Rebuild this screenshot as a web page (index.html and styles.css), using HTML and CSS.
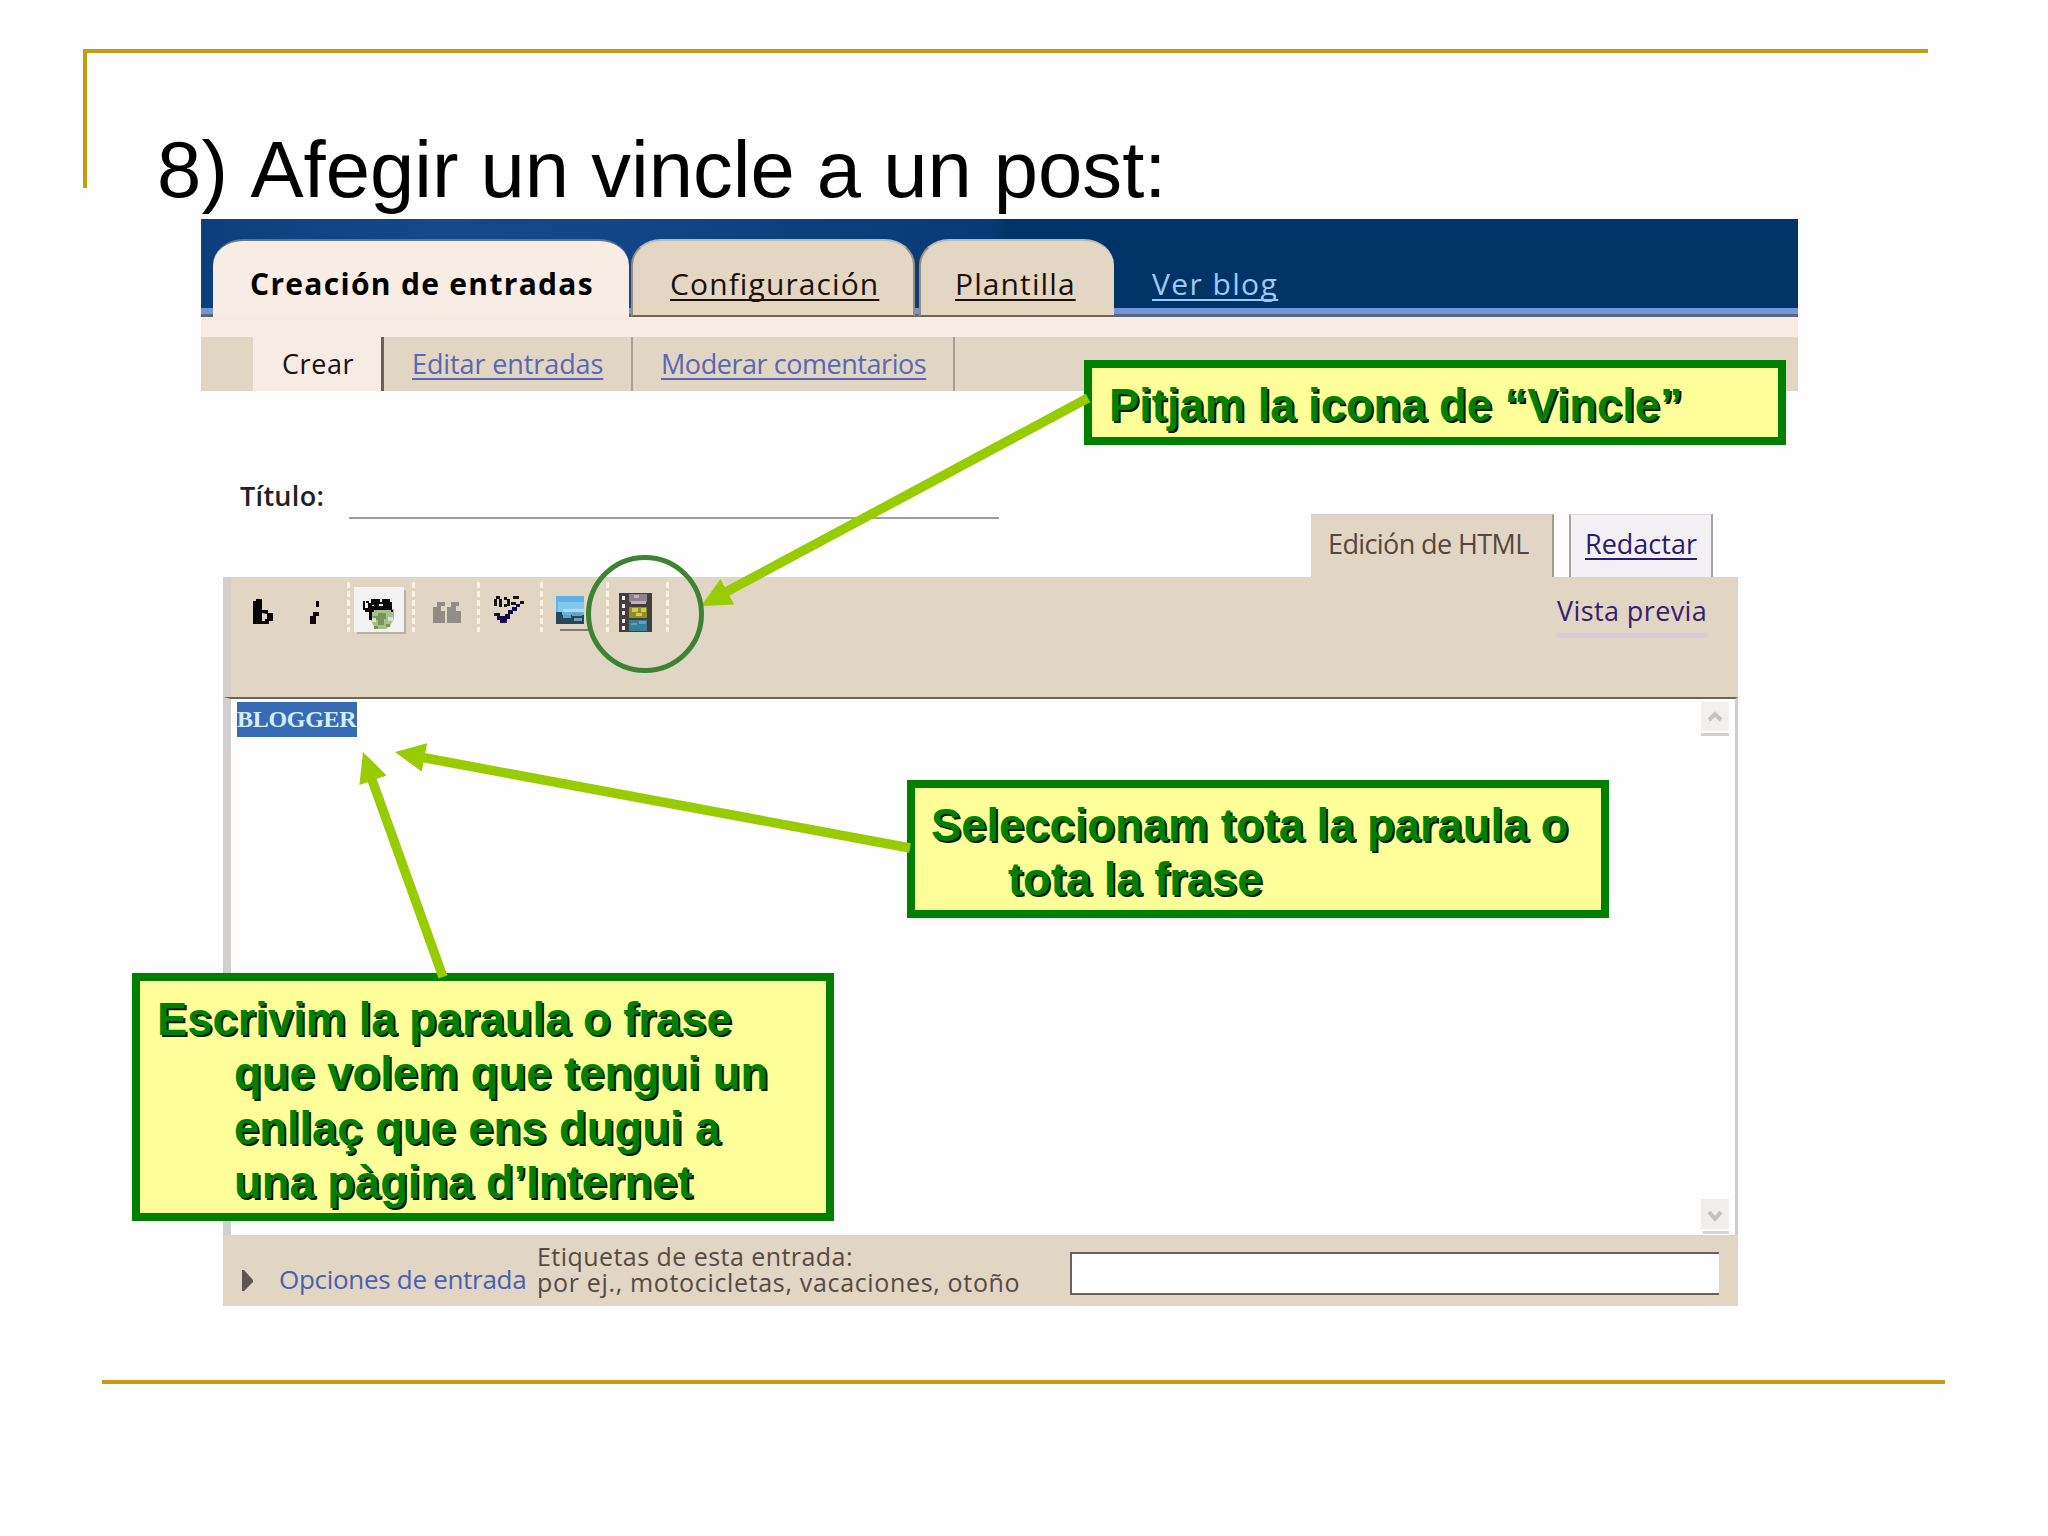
FILE: index.html
```html
<!DOCTYPE html>
<html lang="ca">
<head>
<meta charset="utf-8">
<title>8) Afegir un vincle a un post</title>
<link rel="stylesheet" href="styles.css">
</head>
<body>
<main class="slide">
  <h1 class="title"><span class="title-number">8) </span>Afegir un vincle a un post:</h1>

  <section class="app">
    <nav class="masthead">
      <a class="tab tab-active"><span class="t-crea">Creación de entradas</span></a>
      <a class="tab tab-config"><span class="t-conf link">Configuración</span></a>
      <a class="tab tab-template"><span class="t-plan link">Plantilla</span></a>
      <a class="view-blog"><span class="t-ver link">Ver blog</span></a>
    </nav>
    <nav class="subnav">
      <a class="sub sub-active"><span class="t-crear">Crear</span></a>
      <a class="sub sub-edit"><span class="t-edit link">Editar entradas</span></a>
      <a class="sub sub-mod"><span class="t-mod link">Moderar comentarios</span></a>
    </nav>

    <div class="compose">
      <div class="heading-row">
        <label class="field-label"><span class="t-titulo">Título:</span></label>
        <div class="field"></div>
        <div class="modes">
          <a class="mode mode-html"><span class="t-html">Edición de HTML</span></a>
          <a class="mode mode-write"><span class="t-red link">Redactar</span></a>
        </div>
      </div>

      <div class="toolbar">
        <svg class="icons" width="480" height="120" viewBox="223 577 480 120">
          <g stroke="#fbf3e2" stroke-width="3" stroke-dasharray="6 3">
            <path d="M348.500 582V632M413.500 582V632M478.500 582V632M541.500 582V632M607.500 582V632M667.500 582V632"/>
          </g>
          <path fill="#050303" fill-rule="evenodd" d="M253 601h3v-2h6v11h6v3h5v8h-4v3h-16zM262 613v8h3v-2h2v-5z"/>
          <path fill="#120a08" d="M316 601h3v6h-3zM313 612h6v4h-3v8h-6v-8h3z"/>
          <path fill="#b9b1a8" d="M357 590h49v44h-49z"/>
          <path fill="#f3f3f3" d="M354 587h50v45h-50z"/>
          <path fill="#a8bf8c" d="M370 609h24v10l-4 7-4 3h-9l-4-4-3-7z"/>
          <path fill="#78955f" d="M378 613h8v6h-2v6h-6v-5h-5v-4h5zM374 626h4v3h-4zM386 624h4v3h-4z"/>
          <path fill="#d4e5bf" d="M372 618h4v4h-4zM388 617h5v4h-5z"/>
          <path fill="#080808" d="M363 601h2v7h3v-5h-2v-2h3v2h2v-4h9v3h2v-3h8v3h2v8h-18v2h-9v-2h-2zM369 612h3v8h-3zM391 610h2v2h-2z"/>
          <path fill="#e8e8e8" d="M372 605h2v1h-2zM379 604h4v2h-4z"/>
          <path fill="#918c85" d="M437 602h8v4h-4v5h4v12h-12v-16h4zM451 602h8v4h-3v5h5v12h-14v-16h4z"/>
          <path fill="#171313" d="M496 596h4v3h-4zM494 599h3v7h-3zM499 599h3v8h-3zM504 597h3v3h-3zM507 599h3v7h-3zM504 604h3v3h-3zM513 596h6v3h-6zM511 602h5v3h-5zM520 601h4v3h-4z"/>
          <path fill="#160848" d="M494 613h6v3h5v-2h3v-4h4v-3h4v-3h4v3h-3v4h-4v3h-3v5h-3v4h-7v-3h-3v-4h-3z"/>
          <path fill="#84796e" d="M560 629h30v2h-30z"/>
          <path fill="#60b2e4" d="M556 596h28v28h-28z"/>
          <path fill="#83c8ee" d="M558 602h26v10h-26z"/>
          <path fill="#b5d9e7" d="M563 609h21v3h-21z"/>
          <path fill="#24475b" d="M556 612h6v3h22v9h-28z"/>
          <path fill="#6e9fb4" d="M563 615h8v3h-8zM572 613h10v3h-10zM574 618h8v3h-8z"/>
          <path fill="#443d40" d="M619 593h33v39h-33z"/>
          <path fill="#f3eee5" d="M622 596h3v4h-3zM622 604h3v4h-3zM622 611h3v4h-3zM622 619h3v4h-3zM622 626h3v4h-3z"/>
          <path fill="#8f7f91" d="M629 594h18v8h-18z"/>
          <path fill="#bfb2b8" d="M631 601h15v3h-15zM634 595h5v3h-5z"/>
          <path fill="#8c9227" d="M629 607h18v11h-18z"/>
          <path fill="#d3ce43" d="M632 608h6v4h-6zM641 608h5v4h-5zM636 613h6v3h-6z"/>
          <path fill="#397e99" d="M629 620h18v11h-18z"/>
          <path fill="#5aa3b8" d="M631 623h6v2h-6zM639 621h7v3h-7z"/>
        </svg>
        <a class="preview"><span class="t-vista">Vista previa</span></a>
      </div>

      <div class="editor">
        <div class="editor-text"><span class="selected"><span class="t-blog">BLOGGER</span></span></div>
        <div class="scrollbar">
          <svg class="scroll-btn" width="30" height="35" viewBox="0 0 30 35"><path fill="#f1f0ef" d="M0 0h28v29h-28z"/><path fill="#d3d1cf" d="M0 31h28v3h-28z"/><path fill="none" stroke="#c4c2c0" stroke-width="4" d="M8 18l6-6 6 6"/></svg>
          <svg class="scroll-btn" width="30" height="35" viewBox="0 0 30 35"><path fill="#f0eeec" d="M0 0h28v30h-28z"/><path fill="#d7d3cf" d="M2 32h26v3h-26z"/><path fill="none" stroke="#c4c2c0" stroke-width="4" d="M8 13l6 7 6-7"/></svg>
        </div>
      </div>

      <div class="options">
        <svg class="disclosure" width="12" height="22" viewBox="0 0 12 22"><path fill="#5e564e" d="M0 0h2l9 10v2l-9 9h-2z"/></svg>
        <a class="options-link"><span class="t-opc">Opciones de entrada</span></a>
        <div class="labels-text">
          <div><span class="t-etq">Etiquetas de esta entrada:</span></div>
          <div><span class="t-por">por ej., motocicletas, vacaciones, otoño</span></div>
        </div>
        <div class="labels-input"></div>
      </div>
    </div>
  </section>

  <div class="bottom-rule"></div>

  <p class="callout callout-icon">Pitjam la icona de “Vincle”</p>
  <p class="callout callout-select">Seleccionam tota la paraula o<br><span class="indent">tota la frase</span></p>
  <p class="callout callout-write">Escrivim la paraula o frase<br><span class="indent">que volem que tengui un</span><br><span class="indent">enllaç que ens dugui a</span><br><span class="indent">una pàgina d’Internet</span></p>

  <svg class="arrows" width="2048" height="1536" viewBox="0 0 2048 1536">
    <defs>
      <marker id="head" markerUnits="userSpaceOnUse" markerWidth="32" markerHeight="30" refX="30" refY="14.500" orient="auto"><path fill="#99cc00" d="M0 0L30 14.500L0 29z"/></marker>
    </defs>
    <g stroke="#99cc00" stroke-width="9.500" fill="none">
      <path d="M1088 398L726 592"/><path d="M910 848L420 757"/><path d="M443 977L371 777"/>
    </g>
    <g stroke="#99cc00" stroke-width="0.010" fill="none" marker-end="url(#head)">
      <path d="M1088 398L701 606"/><path d="M910 848L395 752"/><path d="M443 977L363 752"/>
    </g>
    <ellipse cx="645" cy="614" rx="56.500" ry="56.500" fill="none" stroke="#3c8433" stroke-width="5"/>
  </svg>
</main>
</body>
</html>
```
FILE: styles.css
```css
*, ::before { box-sizing: border-box; }
body { margin: 0; background: #fefefe; }
.slide {
  position: relative;
  width: 2048px;
  height: 1536px;
  overflow: hidden;
  padding-top: 123px;
  font-family: "Open Sans", "Noto Sans", sans-serif;
}
.slide::before {
  content: "";
  position: absolute;
  left: 83px;
  top: 49px;
  width: 1845px;
  height: 139px;
  border-top: 4px solid #c79a12;
  border-left: 4px solid #c79a12;
}
.title {
  margin: 0 0 0 157px;
  height: 96px;
  font: 400 79.600px/93px "Liberation Sans", Arial, sans-serif;
  color: #000;
  white-space: nowrap;
}
.title-number { letter-spacing: 0.200px; }
.link { text-decoration: underline; text-decoration-thickness: 2px; text-underline-offset: 4px; text-decoration-skip-ink: none; }
a, label, .labels-text { white-space: nowrap; }
a span, label span, .labels-text span { display: inline-block; }

.app { width: 1597px; margin-left: 201px; }
.masthead {
  display: flex;
  align-items: flex-end;
  height: 98px;
  padding-left: 12px;
  background:
    linear-gradient(#5c6684, #5c6684) 0 100% / 100% 3px no-repeat,
    linear-gradient(#7296d6, #7296d6) 0 89px / 100% 6px no-repeat,
    linear-gradient(90deg, #0d3f7c 0, #14488c 240px, #12468a 420px, #0c3f7e 600px, #073a76 790px, #003466 810px, #003466 100%);
}
.tab {
  height: 78px;
  padding-top: 23px;
  font-size: 30px;
  line-height: 40px;
  color: #1c1009;
  background: #e3d6c3;
  border-radius: 30px 30px 0 0 / 26px 26px 0 0;
  border-top: 2px solid #b5bab9;
  border-bottom: 2px solid #6f6255;
}
.tab-active {
  width: 416px;
  padding-left: 37px;
  font-weight: 700;
  color: #000;
  background: #f7ede4;
  border-top-color: #66758f;
  border-bottom-color: #f7ede4;
}
.tab-config { width: 284px; margin-left: 2px; padding-left: 37px; border-left: 2px solid #9c8d7b; border-right: 2px solid #9c8d7b; }
.tab-template { width: 195px; margin-left: 4px; padding-left: 34px; border-left: 2px solid #9c8d7b; }
.view-blog { height: 78px; padding: 25px 0 0 38px; font-size: 30px; line-height: 40px; color: #9ccaf6; }
.t-crea { letter-spacing: 1.300px; }
.t-conf { letter-spacing: 1.100px; }
.t-plan { letter-spacing: 1.100px; }
.t-ver { letter-spacing: 1.400px; }

.subnav {
  display: flex;
  height: 74px;
  padding-left: 52px;
  border-top: 20px solid #f7ece2;
  background: #e1d5c4;
}
.sub { font-size: 27px; line-height: 53px; color: #5b66b4; border-right: 2px solid #a9a091; }
.sub-active { width: 131px; padding-left: 29px; color: #17110f; background: #f6ebe5; border-right: 3px solid #6b6158; }
.sub-edit { width: 249px; padding-left: 28px; }
.sub-mod { width: 322px; padding-left: 28px; }
.t-crear { letter-spacing: 0.600px; }
.t-edit { letter-spacing: -0.100px; }
.t-mod { letter-spacing: -0.450px; }

.compose { width: 1515px; margin-left: 22px; }
.heading-row { display: flex; height: 186px; }
.field-label { width: 126px; padding: 85px 0 0 17px; font-size: 27px; font-weight: 600; line-height: 40px; color: #222; }
.t-titulo { letter-spacing: 0.300px; }
.field { width: 650px; height: 128px; border-bottom: 2px solid #a09f9e; }
.modes { display: flex; gap: 15px; margin: 123px 0 0 312px; }
.mode { height: 63px; font-size: 27px; line-height: 57px; }
.mode-html { width: 243px; padding-left: 17px; color: #55473c; background: #e1d5c4; border-right: 2px solid #a39c95; border-top: 1px solid #d4cdc2; }
.mode-write { width: 144px; padding-left: 14px; color: #2b1a70; background: #f2f0f2; border: solid #a6a2a0; border-width: 1px 2px 0 2px; border-top-color: #dddad8; }
.t-html { letter-spacing: -0.600px; }

.toolbar { display: flex; justify-content: space-between; height: 120px; background: #e1d5c4; border-left: 8px solid #d5d0ca; }
.icons { margin-left: -8px; }
.preview { width: 181px; padding-top: 14px; font-size: 27px; line-height: 40px; color: #35206f; }
.t-vista { height: 47px; border-bottom: 5px solid #d8cbdc; letter-spacing: 0.400px; }

.editor {
  display: flex;
  justify-content: space-between;
  height: 538px;
  padding: 3px 4px 1px 6px;
  background: #fefefe;
  border-left: 8px solid #d2d0ce;
  border-right: 3px solid #cfcdca;
  border-top: 2px solid #6d645c;
}
.selected { display: block; width: 120px; height: 35px; background: #386bb5; color: #d3efff; overflow: hidden; }
.t-blog { display: inline-block; font: 700 24px/34px "Liberation Serif", serif; letter-spacing: -0.300px; white-space: nowrap; }
.scrollbar { display: flex; flex-direction: column; justify-content: space-between; }
.scroll-btn { display: block; }

.options { display: flex; height: 71px; padding-left: 19px; background: #e1d5c4; }
.disclosure { margin-top: 35px; }
.options-link { width: 257px; padding: 24px 0 0 25px; font-size: 26px; line-height: 40px; color: #4c5eb0; }
.t-opc { letter-spacing: -0.300px; }
.labels-text { width: 559px; padding: 8px 0 0 26px; font-size: 25px; line-height: 26px; color: #574b41; }
.t-etq { letter-spacing: 0.450px; }
.t-por { letter-spacing: 0.670px; }
.labels-input { width: 649px; height: 43px; margin-top: 17px; background: #fff; border: solid #6a6057; border-width: 2px 0 2px 2px; }

.bottom-rule { width: 1843px; height: 4px; margin: 74px 0 0 102px; background: #c79a12; }

.callout {
  position: absolute;
  margin: 0;
  width: 702px;
  border: 8px solid #008000;
  background: #ffff99;
  font: 700 45.350px/54.400px "Liberation Sans", Arial, sans-serif;
  color: #008000;
  text-shadow: 2px 2px 0 #001800;
  white-space: nowrap;
}
.callout-icon { left: 1084px; top: 360px; height: 85px; padding: 11px 0 0 17px; }
.callout-select { left: 907px; top: 780px; height: 138px; padding: 11px 0 0 16px; }
.callout-write { left: 132px; top: 973px; height: 248px; padding: 12px 0 0 17px; }
.indent { margin-left: 77px; }
.arrows { position: absolute; left: 0; top: 0; }
```
